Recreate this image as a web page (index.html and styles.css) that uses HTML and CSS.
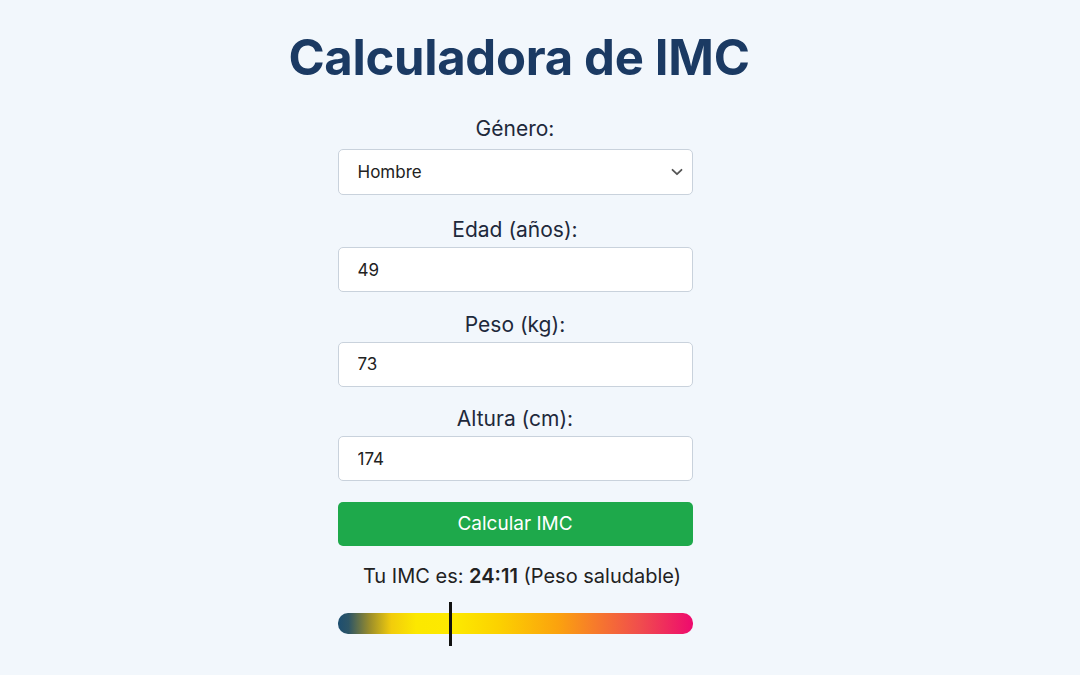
FILE: index.html
```html
<!DOCTYPE html>
<html lang="es">
<head>
	<meta charset="UTF-8">
	<title>Calculadora de IMC</title>
	<link rel="stylesheet" href="styles.css">
</head>
<body>
	<div class="page">
		<h1 class="title">Calculadora de IMC</h1>
		<form class="form">
			<div class="field first">
				<label class="label" for="genero">Género:</label>
				<div class="select-wrap">
					<select id="genero" class="box">
						<option>Hombre</option>
						<option>Mujer</option>
					</select>
					<svg class="chevron" width="12" height="8" viewBox="0 0 12 8"><path d="M1.5 1.8 6 6.2 10.5 1.8" fill="none" stroke="#555" stroke-width="1.8" stroke-linecap="round" stroke-linejoin="round"/></svg>
				</div>
			</div>
			<div class="field">
				<label class="label" for="edad">Edad (años):</label>
				<input id="edad" class="box" type="text" value="49">
			</div>
			<div class="field">
				<label class="label" for="peso">Peso (kg):</label>
				<input id="peso" class="box" type="text" value="73">
			</div>
			<div class="field">
				<label class="label" for="altura">Altura (cm):</label>
				<input id="altura" class="box" type="text" value="174">
			</div>
			<button type="button" class="btn">Calcular IMC</button>
			<p class="result">Tu IMC es: <b>24:11</b> (Peso saludable)</p>
			<div class="scale">
				<div class="bar"></div>
				<div class="marker" style="left:31.5%"></div>
			</div>
		</form>
	</div>
</body>
</html>
```
FILE: styles.css
```css
*{
	margin:0;
	padding:0;
	box-sizing:border-box;
}
body{
	background:#f2f7fc;
	font-family:Inter,"Noto Sans",sans-serif;
	color:#1f2937;
}
.page{
	width:355px;
	margin:0 auto;
	padding-top:26px;
	display:flex;
	flex-direction:column;
	align-items:center;
	transform:translateX(-25px);
}
.title{
	font-size:49px;
	font-weight:700;
	color:#1b3a63;
	line-height:64px;
	white-space:nowrap;
	letter-spacing:-0.3px;
	margin-left:8px;
}
.form{
	width:355px;
	margin-top:25px;
	display:flex;
	flex-direction:column;
	gap:18.5px;
}
.field{
	display:flex;
	flex-direction:column;
}
.field.first{
	margin-bottom:2.5px;
}
.label{
	text-align:center;
	font-size:21px;
	line-height:28px;
	margin-bottom:3px;
	color:#1e293b;
}
.first .label{
	margin-bottom:6px;
}
.box{
	width:100%;
	height:45px;
	border:1.5px solid #c9d2dc;
	border-radius:5px;
	background:#fff;
	font-family:inherit;
	font-size:17px;
	color:#222;
	padding:0 19px;
	outline:none;
}
.select-wrap{
	position:relative;
}
select.box{
	height:46px;
	appearance:none;
	-webkit-appearance:none;
}
.chevron{
	position:absolute;
	right:10px;
	top:19px;
}
.btn{
	height:44px;
	border:none;
	border-radius:5px;
	background:#1ea94b;
	color:#fff;
	font-family:inherit;
	font-size:19px;
	margin-top:2px;
}
.result{
	text-align:center;
	font-size:20px;
	line-height:28px;
	padding-left:14px;
	margin-top:-2px;
	color:#222;
}
.result b{
	font-weight:600;
}
.scale{
	position:relative;
	height:44px;
	margin-top:-7px;
}
.bar{
	position:absolute;
	left:0;
	right:0;
	top:11px;
	height:21px;
	border-radius:10px;
	background:linear-gradient(90deg,#1d4e70 0%,#2d5566 3%,#9c8e2a 9%,#f2cc0c 15%,#fce800 22%,#fde900 33%,#fcd200 45%,#fba20e 62%,#f77c2a 72%,#f04d4d 85%,#ee0a6e 100%);
}
.marker{
	position:absolute;
	top:0;
	width:3px;
	height:44px;
	background:#111;
}
```
